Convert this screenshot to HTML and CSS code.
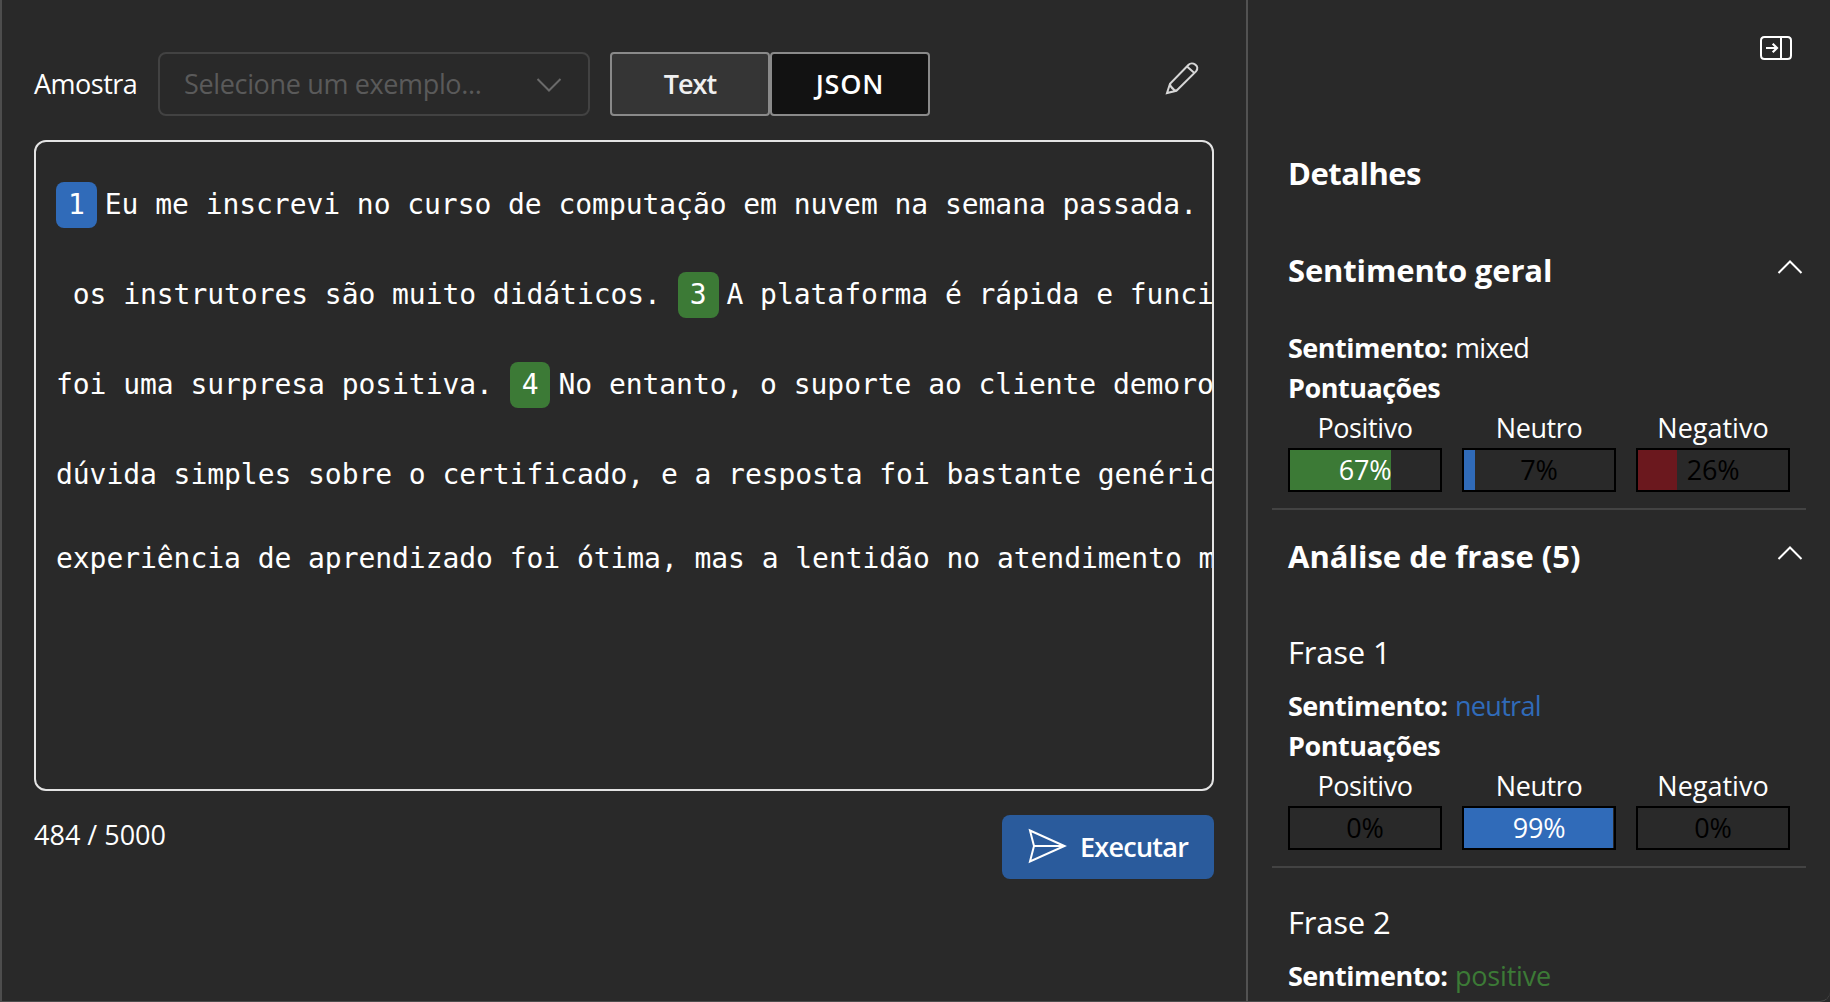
FILE: index.html
```html
<!DOCTYPE html>
<html lang="pt-BR">
<head>
<meta charset="utf-8">
<title>Análise de sentimento</title>
<link rel="stylesheet" href="styles.css">
</head>
<body>
<div class="frame">
  <main class="workspace">
    <div class="toolbar">
      <label class="toolbar-label">Amostra</label>
      <div class="select">
        <span class="placeholder">Selecione um exemplo...</span>
        <svg class="chevron" width="26" height="16" viewBox="0 0 26 16"><path d="M1.5 2 13 13.5 24.5 2"/></svg>
      </div>
      <div class="tabs">
        <button class="tab tab-text">Text</button>
        <button class="tab tab-json">JSON</button>
      </div>
      <svg class="pencil" width="34" height="34" viewBox="15 11 34 34"><path d="M17 43 20 33.8 38.6 14.8C42 11.2 50.6 15.6 46 21.4L26.4 40.8ZM37 16.4 44.4 23M20 33.8C20.6 37.2 23 39.6 26.4 40.8M20 35.5 24.5 40.2"/></svg>
    </div>

    <div class="editor">
      <div class="line"><span class="badge blue">1</span>Eu me inscrevi no curso de computação em nuvem na semana passada.</div>
      <div class="line"> os instrutores são muito didáticos. <span class="badge green">3</span>A plataforma é rápida e funci</div>
      <div class="line">foi uma surpresa positiva. <span class="badge green">4</span>No entanto, o suporte ao cliente demoro</div>
      <div class="line">dúvida simples sobre o certificado, e a resposta foi bastante genéric</div>
      <div class="line last">experiência de aprendizado foi ótima, mas a lentidão no atendimento m</div>
    </div>

    <div class="footer">
      <span class="counter">484 / 5000</span>
      <button class="run">
        <svg class="send" width="40" height="36" viewBox="0 0 40 36"><path d="M2 2.5 36.5 18 2 33.5 6 18ZM6 18H36"/></svg>
        <span>Executar</span>
      </button>
    </div>
  </main>

  <aside class="sidebar">
    <div class="sidebar-top">
      <svg class="collapse" width="32" height="24" viewBox="0 0 32 24"><path d="M4.5 1H27.5Q31 1 31 4.5V19.5Q31 23 27.5 23H4.5Q1 23 1 19.5V4.5Q1 1 4.5 1ZM21 1V23"/><path class="arrow" d="M6 12H17M12.7 7.7 17 12 12.7 16.3"/></svg>
    </div>
    <h2 class="details">Detalhes</h2>

    <section class="section overall">
      <div class="section-head">
        <h3>Sentimento geral</h3>
        <svg class="chevron up" width="26" height="16" viewBox="0 0 26 16"><path d="M1.5 14 13 2.5 24.5 14"/></svg>
      </div>
      <div class="scores-block">
        <p><b>Sentimento:</b> <span class="value">mixed</span></p>
        <p><b>Pontuações</b></p>
        <div class="scores">
          <div class="score"><span>Positivo</span><div class="bar"><div class="fill green" style="width:67%"></div><span class="pct light">67%</span></div></div>
          <div class="score"><span>Neutro</span><div class="bar"><div class="fill blue" style="width:7%"></div><span class="pct">7%</span></div></div>
          <div class="score"><span class="wide">Negativo</span><div class="bar"><div class="fill red" style="width:26%"></div><span class="pct">26%</span></div></div>
        </div>
      </div>
    </section>

    <section class="section phrases">
      <div class="section-head analysis">
        <h3>Análise de frase (5)</h3>
        <svg class="chevron up" width="26" height="16" viewBox="0 0 26 16"><path d="M1.5 14 13 2.5 24.5 14"/></svg>
      </div>
      <article class="phrase">
        <h4>Frase 1</h4>
        <p><b>Sentimento:</b> <span class="value neutral">neutral</span></p>
        <p><b>Pontuações</b></p>
        <div class="scores">
          <div class="score"><span>Positivo</span><div class="bar"><div class="fill green" style="width:0%"></div><span class="pct">0%</span></div></div>
          <div class="score"><span>Neutro</span><div class="bar"><div class="fill blue" style="width:99%"></div><span class="pct light">99%</span></div></div>
          <div class="score"><span class="wide">Negativo</span><div class="bar"><div class="fill red" style="width:0%"></div><span class="pct">0%</span></div></div>
        </div>
      </article>
      <article class="phrase second">
        <h4>Frase 2</h4>
        <p><b>Sentimento:</b> <span class="value positive">positive</span></p>
      </article>
    </section>
  </aside>
</div>
</body>
</html>
```
FILE: styles.css
```css
* { box-sizing: border-box; }

body {
  margin: 0;
  background: #292929;
  color: #fff;
  font: 27px/40px "Open Sans", "Noto Sans", sans-serif;
  letter-spacing: -0.4px;
}

h2, h3, h4, p { margin: 0; }

button {
  margin: 0;
  color: #fff;
  font: 600 27px/40px "Open Sans", "Noto Sans", sans-serif;
}

svg { display: block; flex: none; fill: none; stroke: #fff; stroke-width: 2; }

.frame {
  display: flex;
  width: 1830px;
  height: 1002px;
  overflow: hidden;
  border-left: 2px solid #4d4d4d;
  border-bottom: 1px solid #4d4d4d;
  border-bottom-right-radius: 10px;
}

/* Workspace */
.workspace {
  width: 1246px;
  padding: 52px 32px 0;
  border-right: 2px solid #525252;
}

.toolbar { display: flex; align-items: center; height: 64px; }
.toolbar-label { width: 124px; letter-spacing: -0.5px; white-space: nowrap; }

.select {
  display: flex;
  align-items: center;
  justify-content: space-between;
  width: 432px;
  height: 64px;
  margin-right: 20px;
  padding: 0 26px 0 24px;
  border: 2px solid #424242;
  border-radius: 8px;
  color: #5a5a5a;
}
.select .chevron { stroke: #6a6a6a; margin-top: 2px; }
.placeholder { letter-spacing: -0.35px; }

.tabs { display: flex; }
.tab {
  width: 160px;
  height: 64px;
  padding: 0;
  border: 2px solid #8a8a8a;
  border-radius: 4px;
}
.tab-text { background: #353535; letter-spacing: -1px; color: #f0f0f0; }
.tab-json { background: #121212; letter-spacing: 0.8px; }

.pencil { align-self: flex-start; margin: 9px 15px 0 auto; stroke: #d6d6d6; }

.editor {
  height: 651px;
  margin-top: 24px;
  padding: 18px 0 0 20px;
  overflow: hidden;
  border: 2px solid #e3e3e3;
  border-radius: 12px;
  font-family: "DejaVu Sans Mono", monospace;
  font-size: 28px;
  letter-spacing: -0.055px;
}
.line { height: 90px; line-height: 90px; white-space: pre; }
.line.last { height: 78px; line-height: 78px; }
.badge { margin-right: 8px; padding: 6px 12px 7px; border-radius: 8px; }

.blue { background: #306bb9; }
.green { background: #3c7a36; }
.red { background: #6b181e; }

.footer { display: flex; justify-content: space-between; margin-top: 24px; }
.counter { letter-spacing: 0; }
.run {
  display: flex;
  align-items: center;
  width: 212px;
  height: 64px;
  padding: 0 0 0 26px;
  border: 0;
  border-radius: 8px;
  background: #2a5b9c;
  letter-spacing: -0.75px;
}
.send { margin: -3px 12px 0 0; }

/* Details */
.sidebar { width: 582px; padding: 36px 24px 0; }
.sidebar-top { display: flex; justify-content: flex-end; padding-right: 14px; }
.arrow { stroke-width: 2.2; }

.details, .section-head h3, .phrase h4 { font-size: 31px; line-height: 44px; }
.details { margin: 91px 16px 0; letter-spacing: -0.5px; }

.section-head { display: flex; justify-content: space-between; padding: 53px 3px 0 16px; }
.section-head h3 { letter-spacing: -0.15px; }
.section-head .up { margin-top: 11px; }
.section-head.analysis { padding-top: 24px; }
.section-head.analysis h3 { letter-spacing: 0; }

.scores-block { margin-top: 36px; padding: 0 16px 16px; border-bottom: 2px solid #434343; }
b { letter-spacing: -0.5px; }
.value { margin-left: 1px; letter-spacing: -0.7px; }
.neutral { color: #306bb9; }
.positive { color: #3c7a36; letter-spacing: -0.2px; }

.scores { display: grid; grid-template-columns: repeat(3, 154px); gap: 20px; }
.score { text-align: center; }
.score > span { display: block; }
.score > .wide { letter-spacing: 0; }
.bar { display: grid; height: 44px; border: 2px solid #000; }
.fill, .pct { grid-area: 1 / 1; }
.pct { color: #000; letter-spacing: -0.2px; }
.pct.light { color: #fff; }

.phrase { padding: 52px 16px 16px; border-bottom: 2px solid #434343; }
.phrase h4 { margin-bottom: 12px; font-weight: 400; letter-spacing: -0.2px; }
.phrase.second { padding-top: 32px; border: 0; }
```
